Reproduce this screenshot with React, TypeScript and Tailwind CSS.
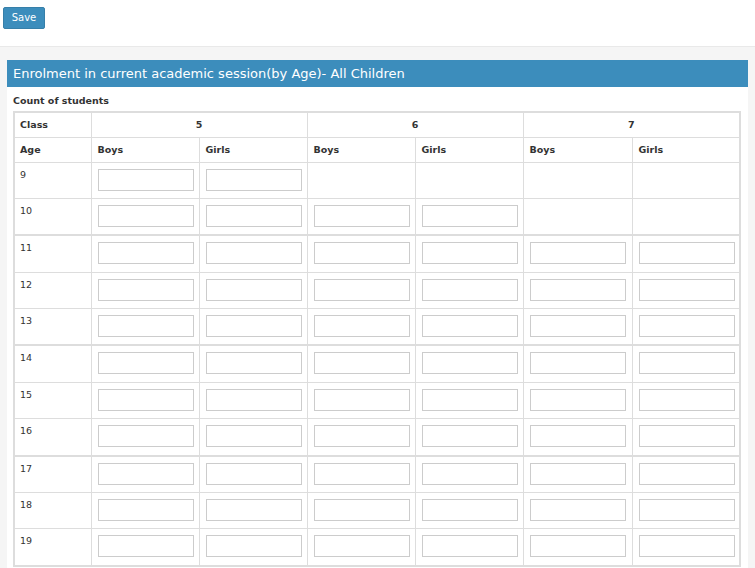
import React from "react"

const groups: number[][] = [
  [9, 10],
  [11, 12, 13],
  [14, 15, 16],
  [17, 18, 19],
]

function Box() {
  return <input type="text" className="block h-[22px] w-[96px] border border-[#ccc] bg-white" />
}

function AgeRow({ age }: { age: number }) {
  // 9 only has class 5, 10 has classes 5 and 6
  const n = age === 9 ? 2 : age === 10 ? 4 : 6
  return (
    <tr className="h-[36.7px]">
      <td className="border border-[#ddd] pl-[5px] pt-[5px] align-top">{age}</td>
      {Array.from({ length: 6 }).map((_, i) => (
        <td key={i} className="border border-[#ddd] px-[6px] pt-[6px] align-top">
          {i < n ? <Box /> : null}
        </td>
      ))}
    </tr>
  )
}

export default function App() {
  return (
    <div className="min-h-screen bg-[#f5f5f5] text-[#333]" style={{ fontFamily: '"DejaVu Sans", sans-serif' }}>
      <div className="h-[47px] border-b border-[#e9e9e9] bg-white px-[3px] pt-[7px]">
        <button className="block h-[22px] w-[42px] rounded-[2px] border border-[#367fa9] bg-[#3c8dbc] text-[10px] leading-[20px] text-white">
          Save
        </button>
      </div>

      <div className="mx-[7px] mt-[13px] bg-white">
        <div className="flex h-[27px] items-center bg-[#3c8dbc] px-[6px] text-[13px] text-white">
          Enrolment in current academic session(by Age)- All Children
        </div>
        <div className="px-[6px] pt-[8px] pb-[8px]">
          <div className="mb-[5px] text-[9.5px] font-bold leading-[11px]">Count of students</div>
          <table className="w-[726px] table-fixed border-collapse border-2 border-[#ddd] text-[9.5px]">
            <colgroup>
              <col className="w-[77px]" />
              <col className="w-[108px]" />
              <col className="w-[108px]" />
              <col className="w-[108px]" />
              <col className="w-[108px]" />
              <col className="w-[109px]" />
              <col className="w-[108px]" />
            </colgroup>
            <thead className="font-bold">
              <tr className="h-[25px]">
                <td className="border border-[#ddd] pl-[5px]">Class</td>
                <td colSpan={2} className="border border-[#ddd] text-center">5</td>
                <td colSpan={2} className="border border-[#ddd] text-center">6</td>
                <td colSpan={2} className="border border-[#ddd] text-center">7</td>
              </tr>
              <tr className="h-[25px]">
                <td className="border border-[#ddd] pl-[5px] pt-[2px]">Age</td>
                <td className="border border-[#ddd] px-[6px] pt-[2px]">Boys</td>
                <td className="border border-[#ddd] px-[6px] pt-[2px]">Girls</td>
                <td className="border border-[#ddd] px-[6px] pt-[2px]">Boys</td>
                <td className="border border-[#ddd] px-[6px] pt-[2px]">Girls</td>
                <td className="border border-[#ddd] px-[6px] pt-[2px]">Boys</td>
                <td className="border border-[#ddd] px-[6px] pt-[2px]">Girls</td>
              </tr>
            </thead>
            {groups.map((g, gi) => (
              <tbody key={gi} className={gi > 0 ? "border-t-2 border-[#ddd]" : ""}>
                {g.map((age) => (
                  <AgeRow key={age} age={age} />
                ))}
              </tbody>
            ))}
          </table>
        </div>
      </div>
    </div>
  )
}
